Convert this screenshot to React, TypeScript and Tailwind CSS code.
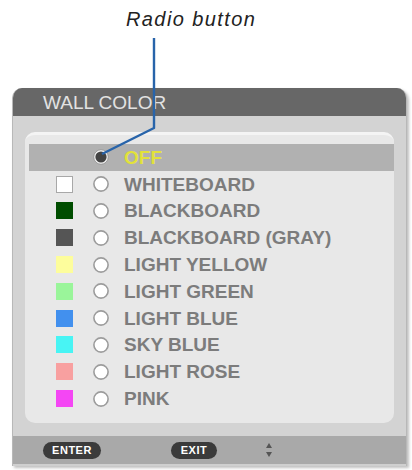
import React from "react";

const items: { label: string; color: string | null; border?: boolean }[] = [
  { label: "OFF", color: null },
  { label: "WHITEBOARD", color: "#ffffff", border: true },
  { label: "BLACKBOARD", color: "#004d00" },
  { label: "BLACKBOARD (GRAY)", color: "#555555" },
  { label: "LIGHT YELLOW", color: "#fdfd9c" },
  { label: "LIGHT GREEN", color: "#9af59a" },
  { label: "LIGHT BLUE", color: "#4290ee" },
  { label: "SKY BLUE", color: "#48f4f4" },
  { label: "LIGHT ROSE", color: "#f8a0a0" },
  { label: "PINK", color: "#f446f4" },
];

function Radio({ on }: { on: boolean }) {
  return (
    <svg width="16" height="16" viewBox="0 0 16 16" className="shrink-0">
      {on ? (
        <>
          <circle cx="8" cy="8" r="7.3" fill="#f4f4f4" stroke="#9a9a9a" strokeWidth="1" />
          <circle cx="8" cy="8" r="5.6" fill="#444444" />
        </>
      ) : (
        <circle cx="8" cy="8" r="7.1" fill="#ffffff" stroke="#9c9c9c" strokeWidth="1.6" />
      )}
    </svg>
  );
}

export default function App() {
  return (
    <div
      className="relative w-[412px] h-[470px] bg-white overflow-hidden"
      style={{ fontFamily: '"Liberation Sans", Arial, sans-serif' }}
    >
      <div className="h-[88px]">
        <div className="pt-[9px] pl-[126px] leading-[20px] text-[20px] italic tracking-[1.4px] text-[#222]">
          Radio button
        </div>
      </div>

      <div className="ml-[12px] w-[395px] h-[378px] rounded-t-[10px] flex flex-col overflow-hidden border-l border-r border-[#b8b8b8] shadow-[2px_2px_3px_rgba(0,0,0,0.25)] bg-[#d3d3d3]">
        <div className="h-[28px] shrink-0 bg-[#676767] flex items-center pl-[30px] text-[19px] leading-none text-[#e2e2e2] font-medium">
          WALL COLOR
        </div>
        <div className="flex-1 flex flex-col px-[12px] pt-[16px]">
          <div className="h-[291px] rounded-[10px] bg-[#e8e8e8] border-t-[3px] border-[#f4f4f4] pt-[9px] flex flex-col">
            {items.map((it, i) => (
              <div
                key={it.label}
                className={
                  i === 0
                    ? "h-[26.8px] flex items-center bg-[#b1b1b1] ml-[4px] pl-[27px]"
                    : "h-[26.8px] flex items-center pl-[31px]"
                }
              >
                <div className="w-[17px] h-[17px] shrink-0 flex">
                  {it.color && (
                    <div
                      className={"w-full h-full " + (it.border ? "border border-[#a8a8a8]" : "")}
                      style={{ backgroundColor: it.color }}
                    />
                  )}
                </div>
                <div className="ml-[20px]">
                  <Radio on={i === 0} />
                </div>
                <div
                  className={
                    "ml-[15px] text-[19px] leading-none font-bold whitespace-nowrap " +
                    (i === 0 ? "text-[#e2e23a]" : "text-[#7c7c7c]")
                  }
                >
                  {it.label}
                </div>
              </div>
            ))}
          </div>
        </div>
        <div className="h-[13px] shrink-0" />
        <div className="h-[28px] shrink-0 bg-[#a9a9a9] flex items-center pl-[30px]">
          <div className="w-[58px] h-[17px] rounded-full bg-[#3b3b3b] flex items-center justify-center text-[11px] font-bold text-white tracking-[0.5px] leading-none">
            ENTER
          </div>
          <div className="ml-[70px] w-[46px] h-[17px] rounded-full bg-[#3b3b3b] flex items-center justify-center text-[11px] font-bold text-white tracking-[0.5px] leading-none">
            EXIT
          </div>
          <svg width="8" height="16" viewBox="0 0 8 16" className="ml-[48px]">
            <polygon points="4,1 7,6 1,6" fill="#555" />
            <polygon points="4,15 7,10 1,10" fill="#555" />
          </svg>
        </div>
        <div className="h-[2px] shrink-0 bg-[#cfcfcf]" />
      </div>

      <svg className="absolute left-0 top-0 pointer-events-none" width="412" height="470">
        <polyline
          points="154,38 154,128 102,154"
          fill="none"
          stroke="#2864aa"
          strokeWidth="2.4"
          strokeLinejoin="round"
        />
      </svg>
    </div>
  );
}
